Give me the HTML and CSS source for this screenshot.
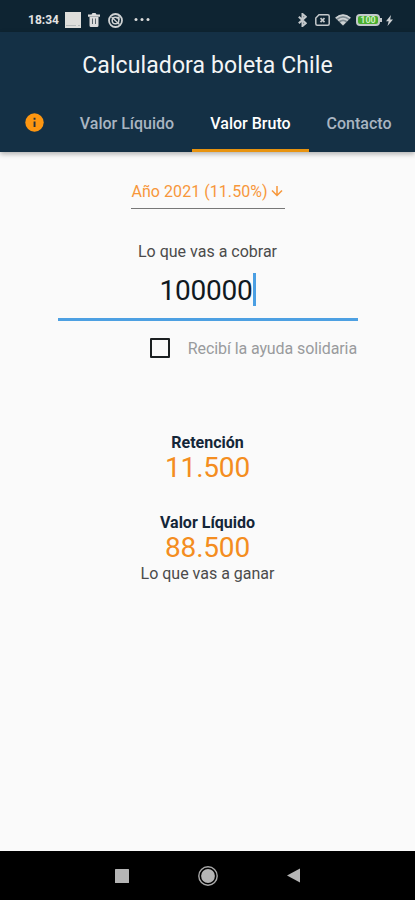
FILE: index.html
```html
<!DOCTYPE html>
<html lang="es">
<head>
    <meta charset="UTF-8">
    <meta name="viewport" content="width=device-width, initial-scale=1.0">
    <title>Calculadora boleta Chile</title>
    <link rel="stylesheet" href="styles.css">
</head>
<body>

<div class="status-bar">
    <div class="status-left">
        <span class="clock">18:34</span>
        <svg class="icon-app" width="16" height="16" viewBox="0 0 16 16">
            <rect width="16" height="16" fill="#dededb"/>
            <path d="M1 13.500h10M13 13.500h2" stroke="#b5babb"/>
        </svg>
        <svg class="icon-trash" width="12" height="14" viewBox="0 0 12 14">
            <path d="M0 1.500h3.500L4.500 0h3L8.500 1.500H12v2.300H0zM1.500 4h9v8.500q0 1.500-1.500 1.500H3q-1.500 0-1.500-1.500z" fill="#dcdcdc"/>
            <path d="M4.500 5.500v5.500M7.500 5.500v5.500" stroke="#59656c"/>
        </svg>
        <svg class="icon-sync" width="15" height="15" viewBox="0 0 15 15" fill="none" stroke="#cfd2d3">
            <circle cx="7.500" cy="7.500" r="6.500" stroke-width="1.800"/>
            <circle cx="7.500" cy="7.500" r="3.300" stroke-width="1.500"/>
            <path d="M3.500 4l8 7.500M8 5l3-1v3" stroke-width="1.300"/>
        </svg>
        <svg width="16" height="4" viewBox="0 0 16 4" fill="#dcdcdc">
            <circle cx="2" cy="1.500" r="1.500"/>
            <circle cx="8" cy="1.500" r="1.500"/>
            <circle cx="14" cy="1.500" r="1.500"/>
        </svg>
    </div>
    <div class="status-right">
        <svg class="icon-bluetooth" width="9" height="14" viewBox="0 0 9 14" fill="none" stroke="#c3c8cb" stroke-width="2">
            <path d="M.8 3.800l7 6.400L4.500 13V1l3.300 2.800-7 6.400"/>
        </svg>
        <svg class="icon-sim" width="15" height="12" viewBox="0 0 15 12" fill="none" stroke="#c3c8cb">
            <path d="M4 .8h8.700q1.500 0 1.500 1.500v7.400q0 1.500-1.500 1.500H2.300q-1.500 0-1.500-1.500V4z" stroke-width="1.500"/>
            <path d="M5.500 4.200l4 4M9.500 4.200l-4 4" stroke-width="1.700"/>
        </svg>
        <svg class="icon-wifi" width="16" height="12" viewBox="0 0 18 13">
            <path d="M0 4Q9-3.500 18 4L9 13z" fill="#7f8c93"/>
            <path d="M1 4.300q8-6.500 16 0M3.600 7q5.400-4.200 10.800 0" fill="none" stroke="#cdd1d3" stroke-width="1.800"/>
            <path d="M5.800 9.200q3.200-2.400 6.400 0L9 12.500z" fill="#cdd1d3"/>
        </svg>
        <span class="battery">100</span>
        <svg width="7" height="11" viewBox="0 0 7 11">
            <path d="M5 0L0 6.200h2.700L1.500 11 7 4.600H4.200z" fill="#cdd1d3"/>
        </svg>
    </div>
</div>

<header class="app-bar">
    <h1>Calculadora boleta Chile</h1>
    <nav class="tabs">
        <a class="tab tab-info" aria-label="Información">
            <svg width="19" height="19" viewBox="0 0 19 19">
                <circle cx="9.500" cy="9.500" r="9.200" fill="#fd9611"/>
                <path d="M8.600 4.800h1.900v1.900H8.600zM8.600 8.400h1.900v5.600H8.600z" fill="#23313c"/>
            </svg>
        </a>
        <a class="tab tab-liquido"><span>Valor Líquido</span></a>
        <a class="tab tab-bruto active"><span>Valor Bruto</span></a>
        <a class="tab tab-contacto"><span>Contacto</span></a>
    </nav>
</header>

<main>
    <div class="year-select">
        <span>Año 2021 (11.50%)</span>
        <svg width="12" height="12" viewBox="0 0 12 12" fill="none" stroke="#f7973a" stroke-width="1.500">
            <path d="M6 1v9.500M1 5.500l5 5 5-5"/>
        </svg>
    </div>

    <label class="amount-label">Lo que vas a cobrar</label>
    <div class="amount">
        <span class="amount-value">100000</span><span class="cursor"></span>
    </div>

    <div class="help-row">
        <span class="checkbox"></span>
        <span class="help-text">Recibí la ayuda solidaria</span>
    </div>

    <div class="result">
        <h2>Retención</h2>
        <p class="result-value">11.500</p>
    </div>
    <div class="result">
        <h2>Valor Líquido</h2>
        <p class="result-value">88.500</p>
        <p class="result-note">Lo que vas a ganar</p>
    </div>
</main>

<footer class="nav-bar">
    <svg width="14" height="14" viewBox="0 0 14 14">
        <rect width="14" height="14" rx=".5" fill="#b5b5b5"/>
    </svg>
    <svg width="20" height="20" viewBox="0 0 20 20">
        <circle cx="10" cy="10" r="9.200" fill="none" stroke="#a9a9a9" stroke-width="1.400"/>
        <circle cx="10" cy="10" r="6.900" fill="#b5b5b5"/>
    </svg>
    <svg width="13" height="15" viewBox="0 0 13 15">
        <path d="M13 .5v14L0 7.500z" fill="#b5b5b5"/>
    </svg>
</footer>

</body>
</html>
```

FILE: styles.css
```css
* {
    box-sizing: border-box;
}
body {
    margin: 0;
    height: 900px;
    display: flex;
    flex-direction: column;
    overflow: hidden;
    background: #fafafa;
    font-family: Roboto, sans-serif;
    color: #4b4b4b;
}
h1, h2, p {
    margin: 0;
}
svg {
    display: block;
    flex: none;
}
.status-bar {
    height: 32px;
    padding: 8px 22px 0 28px;
    display: flex;
    justify-content: space-between;
    background: #0e2432;
}
.status-left, .status-right {
    height: 24px;
    display: flex;
    align-items: center;
}
.clock {
    width: 31px;
    margin-right: 6px;
    color: #e3e3e3;
    font-size: 12px;
    font-weight: 700;
    line-height: 24px;
}
.icon-app {
    margin-right: 7px;
}
.icon-trash {
    margin-right: 8px;
}
.icon-sync {
    margin-right: 11px;
}
.icon-bluetooth {
    margin-right: 8px;
}
.icon-sim {
    margin-right: 5px;
}
.icon-wifi {
    margin-right: 5px;
}
.battery {
    position: relative;
    width: 24px;
    height: 12px;
    margin-right: 6px;
    border: 2px solid #c3c8cb;
    border-radius: 4px;
    background: #48ad2d;
    color: #c9efbd;
    font-size: 9px;
    font-weight: 700;
    line-height: 8px;
    text-align: center;
}
.battery::after {
    content: "";
    position: absolute;
    top: 2px;
    right: -4px;
    width: 2px;
    height: 4px;
    background: #c3c8cb;
}
.app-bar {
    position: relative;
    height: 120px;
    background: #143045;
    box-shadow: 0 2px 5px rgba(0, 0, 0, 0.3);
}
h1 {
    height: 63px;
    color: #f3f5f6;
    font-size: 23px;
    font-weight: 400;
    letter-spacing: 0.1px;
    line-height: 67px;
    text-align: center;
}
.tabs {
    height: 57px;
    padding-left: 7px;
    display: flex;
}
.tab {
    height: 57px;
    display: flex;
    align-items: center;
    justify-content: center;
    border-bottom: 3px solid transparent;
    color: #a9b5c1;
    font-size: 16px;
    font-weight: 500;
}
.tab span {
    padding-top: 2px;
}
.tab-info {
    width: 55px;
}
.tab-liquido {
    width: 130px;
}
.tab-bruto {
    width: 117px;
}
.tab-contacto {
    width: 100px;
}
.active {
    border-bottom-color: #e8930f;
    color: #fff;
}
main {
    flex: 1;
    display: flex;
    flex-direction: column;
    align-items: center;
}
.year-select {
    width: 154px;
    height: 29px;
    margin-top: 28px;
    display: flex;
    align-items: center;
    justify-content: space-between;
    padding: 0 2px 6px 1px;
    border-bottom: 1px solid #777;
    color: #f7973a;
    font-size: 16px;
    letter-spacing: 0.05px;
    white-space: nowrap;
}
.amount-label {
    margin-top: 33px;
    font-size: 16px;
    line-height: 20px;
}
.amount {
    width: 300px;
    height: 59px;
    display: flex;
    justify-content: center;
    padding-top: 11px;
    border-bottom: 3px solid #4da0e2;
    color: #10191f;
    font-size: 28px;
    letter-spacing: -0.2px;
    line-height: 36px;
}
.cursor {
    width: 3px;
    height: 33px;
    background: #4a9fe3;
}
.help-row {
    width: 299px;
    height: 20px;
    margin-top: 17px;
    margin-bottom: 75px;
    display: flex;
    align-items: center;
    justify-content: flex-end;
    gap: 18px;
}
.checkbox {
    width: 20px;
    height: 20px;
    border: 2px solid #1b1f21;
    border-radius: 1px;
}
.help-text {
    color: #999b9d;
    font-size: 16px;
    letter-spacing: -0.1px;
}
.result {
    margin-bottom: 30px;
    text-align: center;
}
h2 {
    color: #142638;
    font-size: 16px;
    font-weight: 700;
    line-height: 20px;
}
.result-value {
    color: #f48d20;
    font-size: 28px;
    letter-spacing: -0.2px;
    line-height: 30px;
}
.result-note {
    font-size: 16px;
    line-height: 22px;
}
.nav-bar {
    height: 49px;
    display: flex;
    align-items: center;
    padding-left: 115px;
    gap: 69px;
    background: #000;
}
```
